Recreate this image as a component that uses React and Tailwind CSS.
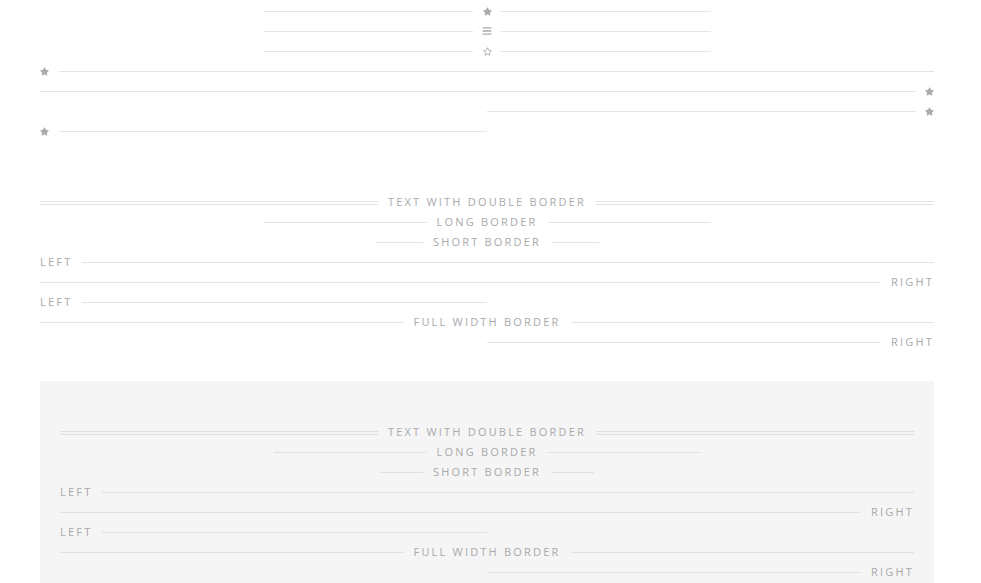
import { FaStar, FaRegStar, FaBars } from "react-icons/fa";

const font = { fontFamily: '"Open Sans", "Liberation Sans", sans-serif' };

function Line({ tone = "light" }) {
  return (
    <div
      className={`h-[2px] flex-1 border-t ${tone === "box" ? "border-[#e0e0e0]" : "border-[#e4e4e4]"}`}
    />
  );
}

function DoubleLine({ tone }) {
  return (
    <div
      className={`h-[4px] flex-1 border-y ${tone === "box" ? "border-[#dedede]" : "border-[#e2e2e2]"}`}
    />
  );
}

function IconRow({ icon, side = "center", width = "w-full" }) {
  return (
    <div className={`flex h-5 items-center ${width}`}>
      {side === "left" ? (
        <>
          <span className="mr-[10px] flex w-[9px] justify-center pb-[2px] text-[#ababab]">{icon}</span>
          <Line />
        </>
      ) : side === "right" ? (
        <>
          <Line />
          <span className="ml-[9px] flex w-[9px] justify-center pb-[2px] text-[#ababab]">{icon}</span>
        </>
      ) : (
        <>
          <Line />
          <span className="mx-[9px] flex w-[10px] justify-center pb-[2px] text-[#ababab]">{icon}</span>
          <Line />
        </>
      )}
    </div>
  );
}

function TextRow({ label, side = "center", width = "w-full", double = false, tone }) {
  const Rule = double ? DoubleLine : Line;
  const text = (pad) => (
    <span
      className={`whitespace-nowrap pb-[3px] text-[11px] leading-none tracking-[2.2px] text-[#a9a9ab] ${pad}`}
    >
      {label}
    </span>
  );
  return (
    <div className={`flex h-5 items-center ${width}`}>
      {side === "left" ? (
        <>
          {text("pr-[10px]")}
          <Rule tone={tone} />
        </>
      ) : side === "right" ? (
        <>
          <Rule tone={tone} />
          {text("pl-[11px]")}
        </>
      ) : (
        <>
          <Rule tone={tone} />
          {text("px-[10px]")}
          <Rule tone={tone} />
        </>
      )}
    </div>
  );
}

function TextSet({ tone }) {
  return (
    <div className="flex flex-col">
      <TextRow label="TEXT WITH DOUBLE BORDER" double tone={tone} />
      <TextRow label="LONG BORDER" width="w-1/2 mx-auto" tone={tone} />
      <TextRow label="SHORT BORDER" width="w-1/4 mx-auto" tone={tone} />
      <TextRow label="LEFT" side="left" tone={tone} />
      <TextRow label="RIGHT" side="right" tone={tone} />
      <TextRow label="LEFT" side="left" width="w-1/2" tone={tone} />
      <TextRow label="FULL WIDTH BORDER" tone={tone} />
      <TextRow label="RIGHT" side="right" width="w-1/2 ml-auto" tone={tone} />
    </div>
  );
}

export default function App() {
  return (
    <div className="min-h-screen bg-white" style={font}>
      <div className="ml-[40px] w-[894px] pt-[2px]">
        <section className="flex flex-col">
          <IconRow icon={<FaStar size={9} />} width="w-1/2 mx-auto" />
          <IconRow icon={<FaBars size={10} />} width="w-1/2 mx-auto" />
          <IconRow icon={<FaRegStar size={9} />} width="w-1/2 mx-auto" />
          <IconRow icon={<FaStar size={9} />} side="left" />
          <IconRow icon={<FaStar size={9} />} side="right" />
          <IconRow icon={<FaStar size={9} />} side="right" width="w-1/2 ml-auto" />
          <IconRow icon={<FaStar size={9} />} side="left" width="w-1/2" />
        </section>

        <section className="mt-[51px]">
          <TextSet />
        </section>

        <section className="mt-[28px] bg-[#f5f5f5] px-[20px] pt-[42px] pb-[40px]">
          <TextSet tone="box" />
        </section>
      </div>
    </div>
  );
}
